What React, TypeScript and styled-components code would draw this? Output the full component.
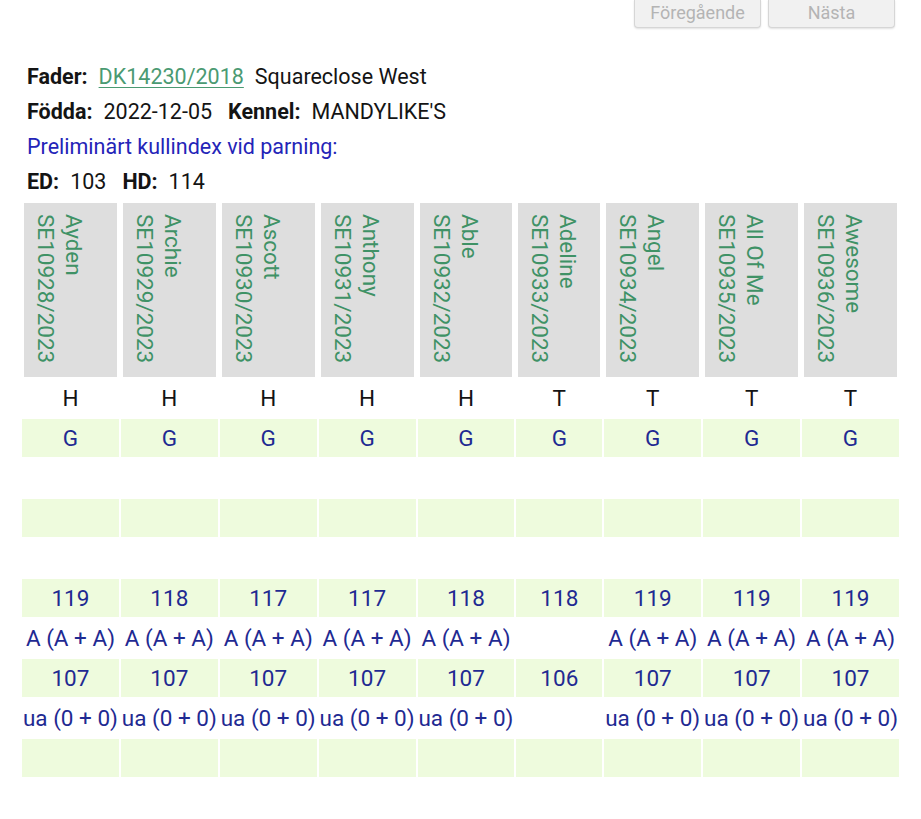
import React from "react";
import styled, { createGlobalStyle } from "styled-components";

const GlobalStyle = createGlobalStyle`
  html, body {
    margin: 0;
    padding: 0;
    background: #ffffff;
  }
  body {
    font-family: Roboto, "Noto Sans", Arial, sans-serif;
    color: #141414;
  }
`;

interface Valp {
  namn: string;
  regnr: string;
  kon: string;
  farg: string;
  hdIndex: string;
  hdStatus: string;
  edIndex: string;
  edStatus: string;
}

const valpar: Valp[] = [
  { namn: "Ayden", regnr: "SE10928/2023", kon: "H", farg: "G", hdIndex: "119", hdStatus: "A (A + A)", edIndex: "107", edStatus: "ua (0 + 0)" },
  { namn: "Archie", regnr: "SE10929/2023", kon: "H", farg: "G", hdIndex: "118", hdStatus: "A (A + A)", edIndex: "107", edStatus: "ua (0 + 0)" },
  { namn: "Ascott", regnr: "SE10930/2023", kon: "H", farg: "G", hdIndex: "117", hdStatus: "A (A + A)", edIndex: "107", edStatus: "ua (0 + 0)" },
  { namn: "Anthony", regnr: "SE10931/2023", kon: "H", farg: "G", hdIndex: "117", hdStatus: "A (A + A)", edIndex: "107", edStatus: "ua (0 + 0)" },
  { namn: "Able", regnr: "SE10932/2023", kon: "H", farg: "G", hdIndex: "118", hdStatus: "A (A + A)", edIndex: "107", edStatus: "ua (0 + 0)" },
  { namn: "Adeline", regnr: "SE10933/2023", kon: "T", farg: "G", hdIndex: "118", hdStatus: "", edIndex: "106", edStatus: "" },
  { namn: "Angel", regnr: "SE10934/2023", kon: "T", farg: "G", hdIndex: "119", hdStatus: "A (A + A)", edIndex: "107", edStatus: "ua (0 + 0)" },
  { namn: "All Of Me", regnr: "SE10935/2023", kon: "T", farg: "G", hdIndex: "119", hdStatus: "A (A + A)", edIndex: "107", edStatus: "ua (0 + 0)" },
  { namn: "Awesome", regnr: "SE10936/2023", kon: "T", farg: "G", hdIndex: "119", hdStatus: "A (A + A)", edIndex: "107", edStatus: "ua (0 + 0)" },
];

const Page = styled.div`
  padding: 0 20px 0 20px;
`;

const Pager = styled.div`
  display: flex;
  justify-content: flex-end;
  gap: 7px;
  padding-right: 6px;
`;

const PagerButton = styled.button`
  width: 127px;
  height: 28px;
  padding: 0 0 3px;
  background: #f1f1f1;
  border: 1px solid #d6d6d6;
  border-top: none;
  border-radius: 0 0 4px 4px;
  box-shadow: 0 1px 2px rgba(0, 0, 0, 0.12);
  color: #b4b4b4;
  font-family: Roboto, Arial, sans-serif;
  font-size: 18px;
`;

const Info = styled.div`
  margin-top: 31px;
  padding-left: 7px;
  font-size: 21.5px;
  line-height: 35px;
`;

const Line = styled.div<{ $blue?: boolean }>`
  color: ${(p) => (p.$blue ? "#2424b8" : "#141414")};
  white-space: nowrap;
`;

const Label = styled.b`
  font-weight: 700;
  margin-right: 11px;
`;

const Value = styled.span`
  margin-right: 16px;
`;

const Link = styled.a`
  color: #4a9a72;
  text-decoration: underline;
  text-decoration-thickness: 1px;
  text-underline-offset: 3px;
  margin-right: 11px;
`;

const Table = styled.table`
  border-collapse: separate;
  border-spacing: 2px;
  margin-top: 2px;
  font-size: 22.5px;
`;

const HeadCell = styled.th<{ $w: number }>`
  width: ${(p) => p.$w}px;
  padding: 0 2px;
  vertical-align: top;
`;

const HeadBox = styled.div`
  height: 174px;
  background: #dedede;
  display: flex;
  justify-content: flex-start;
  padding: 11px 0 0 8px;
  box-sizing: border-box;
`;

const Rotated = styled.div`
  writing-mode: vertical-rl;
  color: #3f9266;
  font-weight: 400;
  font-size: 22.5px;
  line-height: 28px;
  text-align: left;
  white-space: nowrap;
`;

const Row = styled.tr<{ $green?: boolean }>`
  td {
    background: ${(p) => (p.$green ? "#eefbdd" : "transparent")};
  }
`;

const Cell = styled.td<{ $dark?: boolean }>`
  height: 38px;
  padding: 0;
  text-align: center;
  vertical-align: middle;
  white-space: nowrap;
  color: ${(p) => (p.$dark ? "#141414" : "#1f2a92")};
`;

const kolumnBredd = (v: Valp) => (v.hdStatus ? 93 : 83);

export default function App() {
  const rader: { key: keyof Valp | ""; green: boolean; dark?: boolean }[] = [
    { key: "kon", green: false, dark: true },
    { key: "farg", green: true },
    { key: "", green: false },
    { key: "", green: true },
    { key: "", green: false },
    { key: "hdIndex", green: true },
    { key: "hdStatus", green: false },
    { key: "edIndex", green: true },
    { key: "edStatus", green: false },
    { key: "", green: true },
    { key: "", green: false },
    { key: "", green: true },
  ];

  return (
    <>
      <GlobalStyle />
      <Page>
        <Pager>
          <PagerButton disabled>Föregående</PagerButton>
          <PagerButton disabled>Nästa</PagerButton>
        </Pager>
        <Info>
          <Line>
            <Label>Fader:</Label>
            <Link href="#">DK14230/2018</Link>
            <span>Squareclose West</span>
          </Line>
          <Line>
            <Label>Födda:</Label>
            <Value>2022-12-05</Value>
            <Label>Kennel:</Label>
            <span>MANDYLIKE'S</span>
          </Line>
          <Line $blue>Preliminärt kullindex vid parning:</Line>
          <Line>
            <Label>ED:</Label>
            <Value>103</Value>
            <Label>HD:</Label>
            <span>114</span>
          </Line>
        </Info>
        <Table>
          <thead>
            <tr>
              {valpar.map((v) => (
                <HeadCell key={v.regnr} $w={kolumnBredd(v)}>
                  <HeadBox>
                    <Rotated>
                      {v.namn}
                      <br />
                      {v.regnr}
                    </Rotated>
                  </HeadBox>
                </HeadCell>
              ))}
            </tr>
          </thead>
          <tbody>
            {rader.map((r, i) => (
              <Row key={i} $green={r.green}>
                {valpar.map((v) => (
                  <Cell key={v.regnr} $dark={r.dark}>
                    {r.key ? v[r.key] : ""}
                  </Cell>
                ))}
              </Row>
            ))}
          </tbody>
        </Table>
      </Page>
    </>
  );
}
